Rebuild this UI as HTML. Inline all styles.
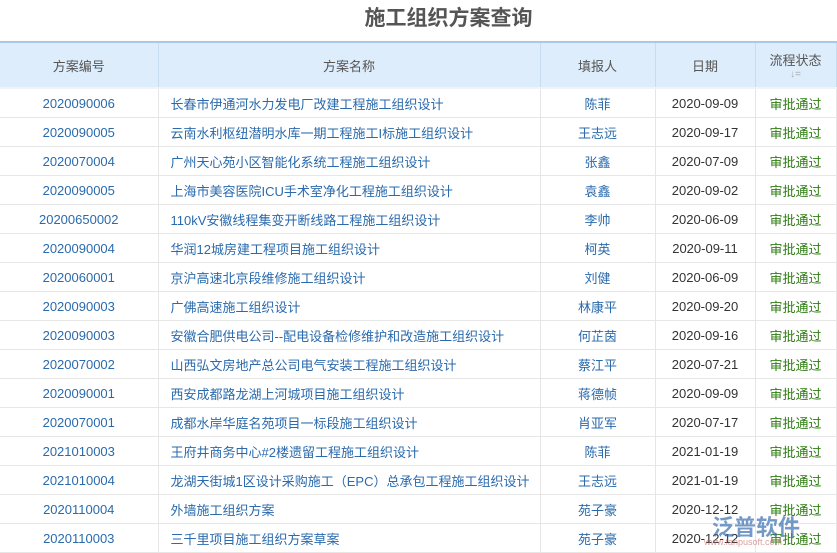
<!DOCTYPE html>
<html><head><meta charset="utf-8"><style>
body{margin:0;width:837px;height:553px;overflow:hidden;background:#fff;font-family:"Liberation Sans","Noto Sans CJK SC",sans-serif;font-size:13px;position:relative}
h1{margin:0;position:absolute;top:2px;left:60px;width:777px;text-align:center;font-size:21px;font-weight:bold;color:#555;letter-spacing:0}
table{position:absolute;top:41px;left:0;width:836px;border-collapse:collapse;table-layout:fixed}
th{background:#deedfb;color:#555;font-weight:normal;height:44px;border-top:2px solid #a9c8e6;border-right:1px solid #c8dcef;border-bottom:2px solid #eef3f8;padding:0}
td{height:28px;border-bottom:1px solid #e6e6e6;border-right:1px solid #e6e6e6;text-align:center;padding:0;color:#2a6aad;white-space:nowrap;overflow:hidden}
td.n{text-align:left;padding-left:12px}
td.d{color:#333}
td.s{color:#2e7d12}
.sort{display:block;font-size:10px;color:#aaa;line-height:12px}
.logo{position:absolute;left:712px;top:510px;font-size:22px;color:#3a6fb0;font-weight:bold;opacity:.7}
.logo small{position:absolute;left:-8px;top:27px;font-size:9px;color:#c77;font-weight:normal;white-space:nowrap}
</style></head><body>
<h1>施工组织方案查询</h1>
<table>
<colgroup><col style="width:158px"><col style="width:382px"><col style="width:115px"><col style="width:100px"><col style="width:81px"></colgroup>
<tr><th>方案编号</th><th>方案名称</th><th>填报人</th><th>日期</th><th>流程状态<span class="sort">↓=</span></th></tr>
<tr><td>2020090006</td><td class="n">长春市伊通河水力发电厂改建工程施工组织设计</td><td>陈菲</td><td class="d">2020-09-09</td><td class="s">审批通过</td></tr>
<tr><td>2020090005</td><td class="n">云南水利枢纽潜明水库一期工程施工I标施工组织设计</td><td>王志远</td><td class="d">2020-09-17</td><td class="s">审批通过</td></tr>
<tr><td>2020070004</td><td class="n">广州天心苑小区智能化系统工程施工组织设计</td><td>张鑫</td><td class="d">2020-07-09</td><td class="s">审批通过</td></tr>
<tr><td>2020090005</td><td class="n">上海市美容医院ICU手术室净化工程施工组织设计</td><td>袁鑫</td><td class="d">2020-09-02</td><td class="s">审批通过</td></tr>
<tr><td>20200650002</td><td class="n">110kV安徽线程集变开断线路工程施工组织设计</td><td>李帅</td><td class="d">2020-06-09</td><td class="s">审批通过</td></tr>
<tr><td>2020090004</td><td class="n">华润12城房建工程项目施工组织设计</td><td>柯英</td><td class="d">2020-09-11</td><td class="s">审批通过</td></tr>
<tr><td>2020060001</td><td class="n">京沪高速北京段维修施工组织设计</td><td>刘健</td><td class="d">2020-06-09</td><td class="s">审批通过</td></tr>
<tr><td>2020090003</td><td class="n">广佛高速施工组织设计</td><td>林康平</td><td class="d">2020-09-20</td><td class="s">审批通过</td></tr>
<tr><td>2020090003</td><td class="n">安徽合肥供电公司--配电设备检修维护和改造施工组织设计</td><td>何芷茵</td><td class="d">2020-09-16</td><td class="s">审批通过</td></tr>
<tr><td>2020070002</td><td class="n">山西弘文房地产总公司电气安装工程施工组织设计</td><td>蔡江平</td><td class="d">2020-07-21</td><td class="s">审批通过</td></tr>
<tr><td>2020090001</td><td class="n">西安成都路龙湖上河城项目施工组织设计</td><td>蒋德帧</td><td class="d">2020-09-09</td><td class="s">审批通过</td></tr>
<tr><td>2020070001</td><td class="n">成都水岸华庭名苑项目一标段施工组织设计</td><td>肖亚军</td><td class="d">2020-07-17</td><td class="s">审批通过</td></tr>
<tr><td>2021010003</td><td class="n">王府井商务中心#2楼遗留工程施工组织设计</td><td>陈菲</td><td class="d">2021-01-19</td><td class="s">审批通过</td></tr>
<tr><td>2021010004</td><td class="n">龙湖天街城1区设计采购施工（EPC）总承包工程施工组织设计</td><td>王志远</td><td class="d">2021-01-19</td><td class="s">审批通过</td></tr>
<tr><td>2020110004</td><td class="n">外墙施工组织方案</td><td>苑子豪</td><td class="d">2020-12-12</td><td class="s">审批通过</td></tr>
<tr><td>2020110003</td><td class="n">三千里项目施工组织方案草案</td><td>苑子豪</td><td class="d">2020-12-12</td><td class="s">审批通过</td></tr>
</table>
<div class="logo">泛普软件<small>www.fanpusoft.com</small></div>
</body></html>
